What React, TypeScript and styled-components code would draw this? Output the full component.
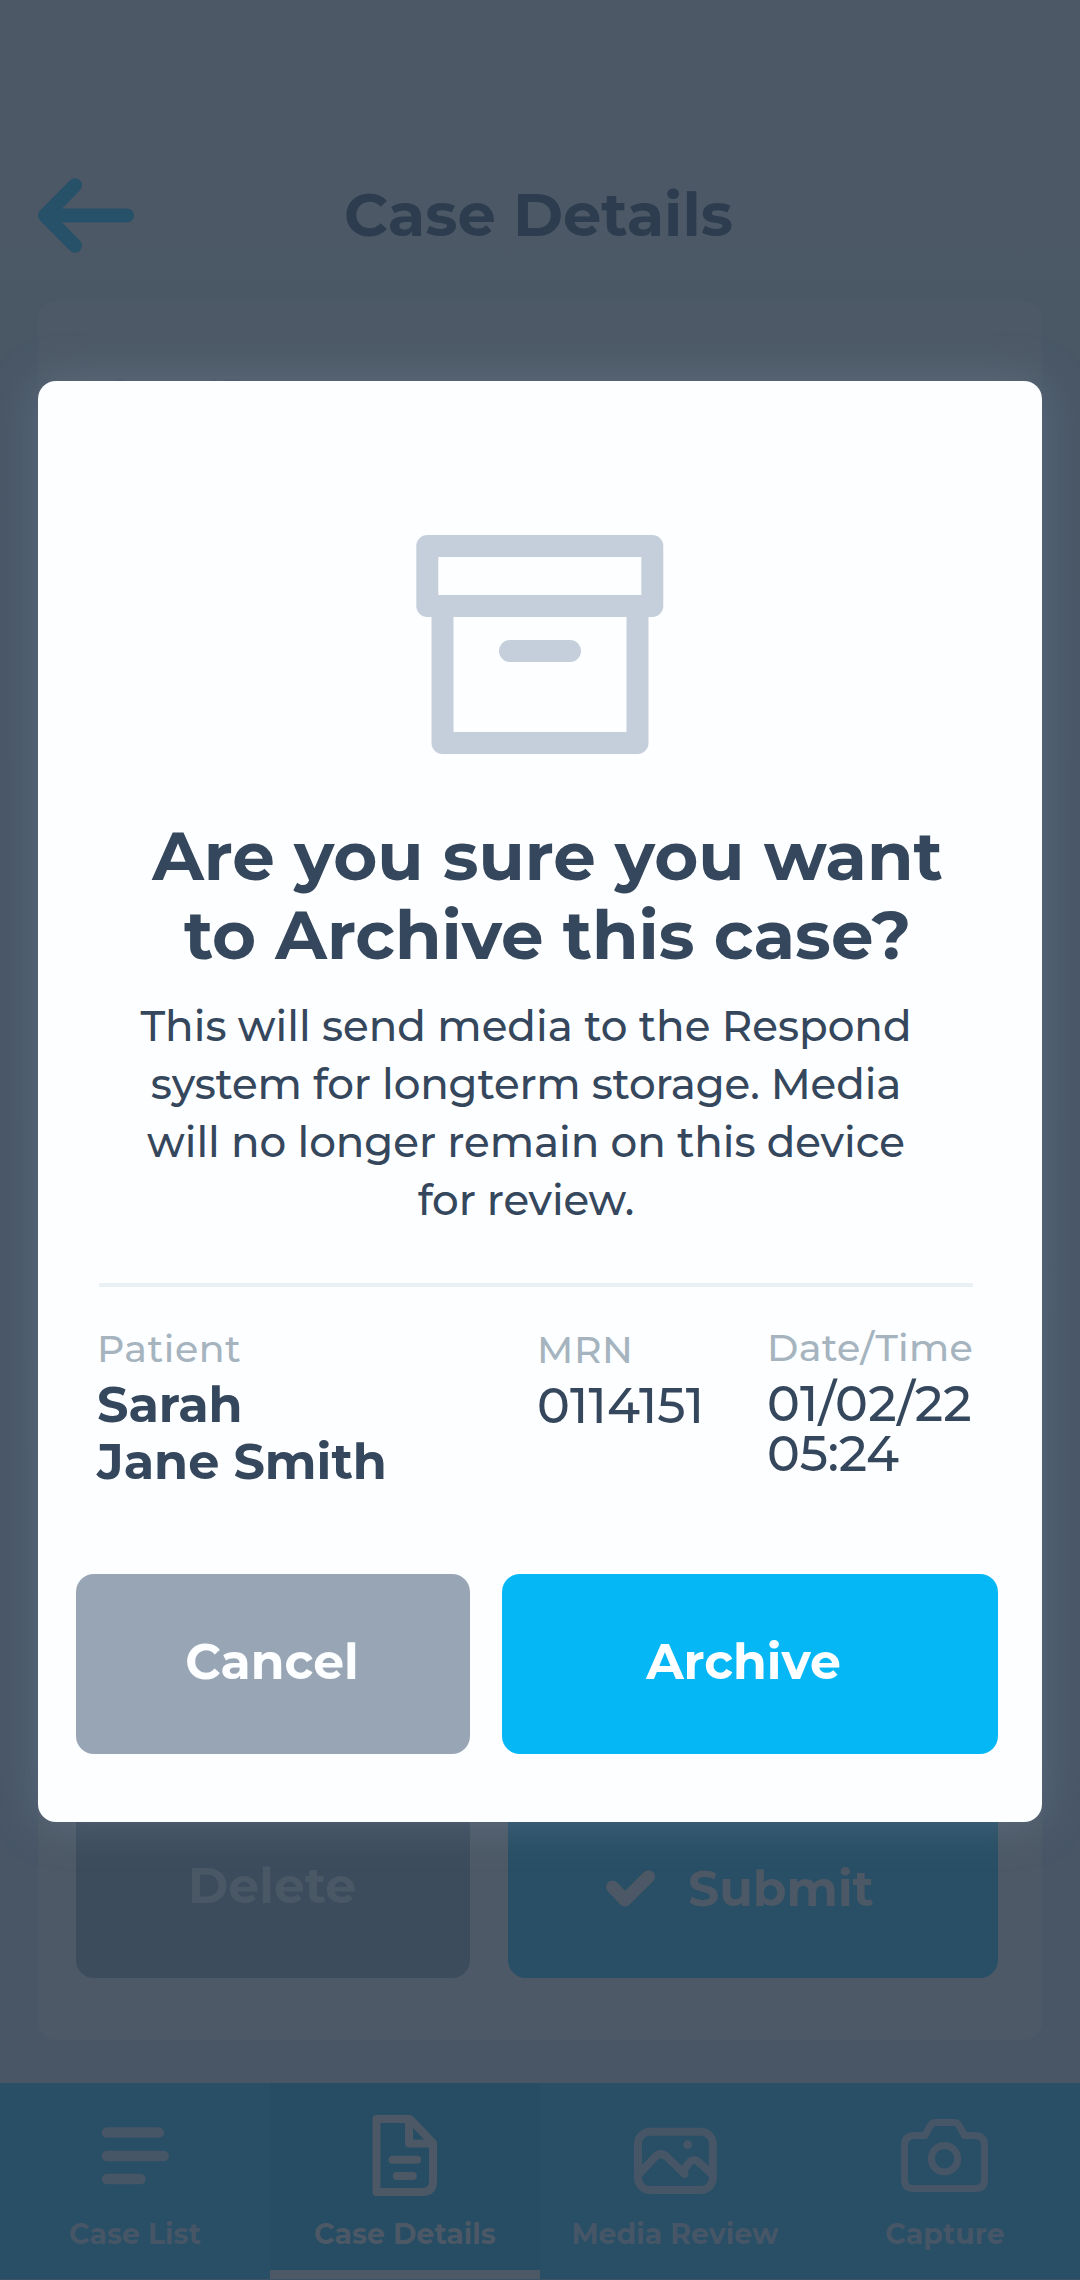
import React from "react";
import styled, { createGlobalStyle } from "styled-components";

const font = `Montserrat, Inter, "Open Sans", sans-serif`;
const muted = "#4c5865";
const dim = "#465667";

const Global = createGlobalStyle`
  * { box-sizing: border-box; }
  body { margin: 0; background: #4b5765; font-family: ${font}; }
`;
const Screen = styled.div`
  position: relative;
  width: 1080px;
  height: 2280px;
  display: flex;
  flex-direction: column;
  overflow: hidden;
  background: linear-gradient(#4c5865 0, #4c5865 240px, #4a5865 300px, #495766 420px, #485666 1900px, #4a5666 2280px);
`;
const Header = styled.header`
  display: grid;
  grid-template-columns: 1fr auto 1fr;
  align-items: center;
  height: 129px;
  margin-top: 150px;
  padding: 0 38px;
`;
const Title = styled.h1`
  margin: 0 3px 1px 0;
  font-size: 60.7px;
  line-height: 72px;
  font-weight: 700;
  color: #2d3c4e;
`;
const Spread = styled.span<{ $ls?: number }>`
  letter-spacing: ${(p) => p.$ls ?? 0}px;
  white-space: nowrap;
`;
const Card = styled.main`
  display: flex;
  flex-direction: column;
  justify-content: space-between;
  height: 1739px;
  margin: 22px 38px 0;
  padding: 67px 44px 62px 38px;
  border-radius: 18px;
  background: #4d5966;
`;
const CardLabel = styled.div`
  padding-left: 28px;
  font-size: 38px;
  line-height: 50px;
  font-weight: 600;
  color: #465366;
`;
const Buttons = styled.div<{ $gap: number }>`
  display: flex;
  gap: ${(p) => p.$gap}px;
`;
const Button = styled.button<{ $bg: string; $fg: string; $w?: number; $shift?: number; $lift?: number }>`
  display: flex;
  align-items: center;
  justify-content: center;
  gap: 32px;
  flex: ${(p) => (p.$w ? `0 0 ${p.$w}px` : "1")};
  height: 180px;
  padding: 0 ${(p) => p.$shift ?? 0}px ${(p) => p.$lift ?? 5}px 0;
  border: 0;
  border-radius: 18px;
  background: ${(p) => p.$bg};
  color: ${(p) => p.$fg};
  font: 700 48.9px/60px ${font};
`;
const SubmitLabel = styled(Spread)`
  padding: 2px 0 0 1px;
`;
const Nav = styled.nav`
  display: grid;
  grid-template-columns: repeat(4, 1fr);
  height: 197px;
  margin-top: auto;
  background: #284f65;
  border-bottom: 1px solid #3c5366;
`;
const Tab = styled.div<{ $on?: boolean }>`
  display: flex;
  flex-direction: column;
  align-items: center;
  padding-top: 24px;
  color: ${(p) => (p.$on ? muted : dim)};
  background: ${(p) => (p.$on ? "#264d63" : "transparent")};
  box-shadow: ${(p) => (p.$on ? `inset 0 -9px ${muted}` : "none")};
  font-size: 28.4px;
  line-height: 34px;
  font-weight: 700;
  svg { margin-bottom: 10px; }
`;
const Modal = styled.section`
  position: absolute;
  left: 38px;
  top: 381px;
  width: 1004px;
  height: 1441px;
  display: flex;
  flex-direction: column;
  padding: 154px 44px 68px 38px;
  border-radius: 18px;
  background: #fdfeff;
  box-shadow: 0 0 46px rgba(120, 138, 162, 0.42);
  color: #35475c;
`;
const ArchiveArt = styled.svg`
  align-self: center;
  flex: none;
  margin-left: 6px;
`;
const Question = styled.h2`
  display: flex;
  flex-direction: column;
  align-items: center;
  margin: 62px 0 0 21px;
  font-size: 67.4px;
  line-height: 79px;
  font-weight: 700;
`;
const Note = styled.p`
  display: flex;
  flex-direction: column;
  align-items: center;
  margin: 22px 22px 0 0;
  font-size: 42px;
  line-height: 58px;
  font-weight: 500;
`;
const Rule = styled.hr`
  width: 874px;
  height: 4px;
  margin: 54px 0 0 23px;
  border: 0;
  background: #e9f1f5;
`;
const Facts = styled.dl`
  display: grid;
  grid-template-columns: 440px 230px auto;
  margin: 37px 0 0 21px;
`;
const Fact = styled.div<{ $dy?: number }>`
  margin-top: ${(p) => p.$dy ?? 0}px;
`;
const Term = styled.dt`
  font-size: 38px;
  line-height: 50px;
  font-weight: 500;
  color: #a5b4be;
`;
const Value = styled.dd<{ $bold?: boolean; $lh: number; $top: number }>`
  display: flex;
  flex-direction: column;
  margin: ${(p) => p.$top}px 0 0;
  font-size: 49.3px;
  line-height: ${(p) => p.$lh}px;
  font-weight: ${(p) => (p.$bold ? 700 : 500)};
`;
const Actions = styled(Buttons)`
  margin-top: auto;
`;

const BackArrow = () => (
  <svg width="96" height="76" viewBox="0 0 96 76" fill="none" stroke="#275069" strokeWidth="14" strokeLinecap="round" strokeLinejoin="round">
    <path d="M37 8.200 7 38.500l30 30.300M7 38.500h82" />
  </svg>
);
const Check = () => (
  <svg width="49" height="37" viewBox="0 0 49 37" fill="none" stroke={muted} strokeWidth="13" strokeLinecap="round" strokeLinejoin="round">
    <path d="M6.500 17 19 30 42.500 6.700" />
  </svg>
);
const ListIcon = () => (
  <svg width="84" height="100" viewBox="0 0 84 100" fill="none" stroke="currentColor" strokeWidth="10.5" strokeLinecap="round">
    <path d="M14 25.500h51.800M14 49h56.700M14 72h33.500" />
  </svg>
);
const DocIcon = () => (
  <svg width="66" height="100" viewBox="0 0 66 100" fill="none" stroke="currentColor" strokeWidth="8" strokeLinejoin="round">
    <path d="M4.500 12h33.500l23 24v38.500q0 10.500-10.500 10.500H4.500z M37 12v24.500h24" />
    <path d="M20.500 52.700h24.700M24.800 69h16" strokeLinecap="round" />
  </svg>
);
const ImageIcon = () => (
  <svg width="84" height="100" viewBox="0 0 84 100" fill="none" stroke="currentColor" strokeWidth="8" strokeLinecap="round" strokeLinejoin="round">
    <rect x="5" y="24.700" width="74.800" height="58.300" rx="12" />
    <path d="M6 67 22.500 49.500q5.500-5 11 0L51.500 67q-1.500-4 2-8l3-3.500q4.500-5 9.500 0L79 67" />
    <circle cx="54.700" cy="37.700" r="4.400" fill="currentColor" stroke="none" />
  </svg>
);
const CameraIcon = () => (
  <svg width="88" height="100" viewBox="0 0 88 100" fill="none" stroke="currentColor" strokeWidth="7" strokeLinecap="round" strokeLinejoin="round">
    <path d="M13.500 28.500h10.500l5.300-10q1.700-3 5.200-3h18.500q3.500 0 5.200 3l5.300 10h10q10 0 10 10v34q0 9-9 9h-62q-9 0-9-9v-34q0-10 10-10z" />
    <circle cx="43.500" cy="51.700" r="13.200" />
  </svg>
);

export default function App() {
  return (
    <>
      <Global />
      <Screen>
        <Header>
          <BackArrow />
          <Title><Spread>Case Details</Spread></Title>
        </Header>
        <Card>
          <CardLabel>Case ID</CardLabel>
          <Buttons $gap={38}>
            <Button $bg="#3d4c5c" $fg="#4a5866" $w={394} $shift={2}><Spread>Delete</Spread></Button>
            <Button $bg="#284f65" $fg={muted} $shift={26} $lift={0}><Check /><SubmitLabel>Submit</SubmitLabel></Button>
          </Buttons>
        </Card>
        <Nav>
          <Tab><ListIcon /><Spread>Case List</Spread></Tab>
          <Tab $on><DocIcon /><Spread>Case Details</Spread></Tab>
          <Tab><ImageIcon /><Spread>Media Review</Spread></Tab>
          <Tab><CameraIcon /><Spread>Capture</Spread></Tab>
        </Nav>
        <Modal role="dialog">
          <ArchiveArt width="248" height="220" viewBox="0 0 248 220" fill="none" stroke="#c5cfdb" strokeWidth="22" strokeLinejoin="round" strokeLinecap="round">
            <path d="M11.300 11h225v60h-225zM26.500 71v137h195V71M94 116h60" />
          </ArchiveArt>
          <Question>
            <Spread>Are you sure you want</Spread>
            <Spread>to Archive this case?</Spread>
          </Question>
          <Note>
            <Spread>This will send media to the Respond</Spread>
            <Spread $ls={-0.15}>system for longterm storage. Media</Spread>
            <Spread $ls={-0.05}>will no longer remain on this device</Spread>
            <Spread $ls={-0.15}>for review.</Spread>
          </Note>
          <Rule />
          <Facts>
            <Fact>
              <Term><Spread $ls={0.5}>Patient</Spread></Term>
              <Value $bold $lh={57} $top={2}><Spread>Sarah</Spread><Spread>Jane Smith</Spread></Value>
            </Fact>
            <Fact $dy={1}>
              <Term><Spread $ls={0.6}>MRN</Spread></Term>
              <Value $lh={57} $top={2}><Spread $ls={0.2}>0114151</Spread></Value>
            </Fact>
            <Fact $dy={-1}>
              <Term><Spread $ls={0.3}>Date/Time</Spread></Term>
              <Value $lh={50} $top={5}><Spread $ls={0.2}>01/02/22</Spread><Spread $ls={-0.2}>05:24</Spread></Value>
            </Fact>
          </Facts>
          <Actions $gap={32}>
            <Button $bg="#98a5b5" $fg="#fdfeff" $w={394} $shift={2}><Spread>Cancel</Spread></Button>
            <Button $bg="#06b7f5" $fg="#fdfeff" $shift={13}><Spread>Archive</Spread></Button>
          </Actions>
        </Modal>
      </Screen>
    </>
  );
}
